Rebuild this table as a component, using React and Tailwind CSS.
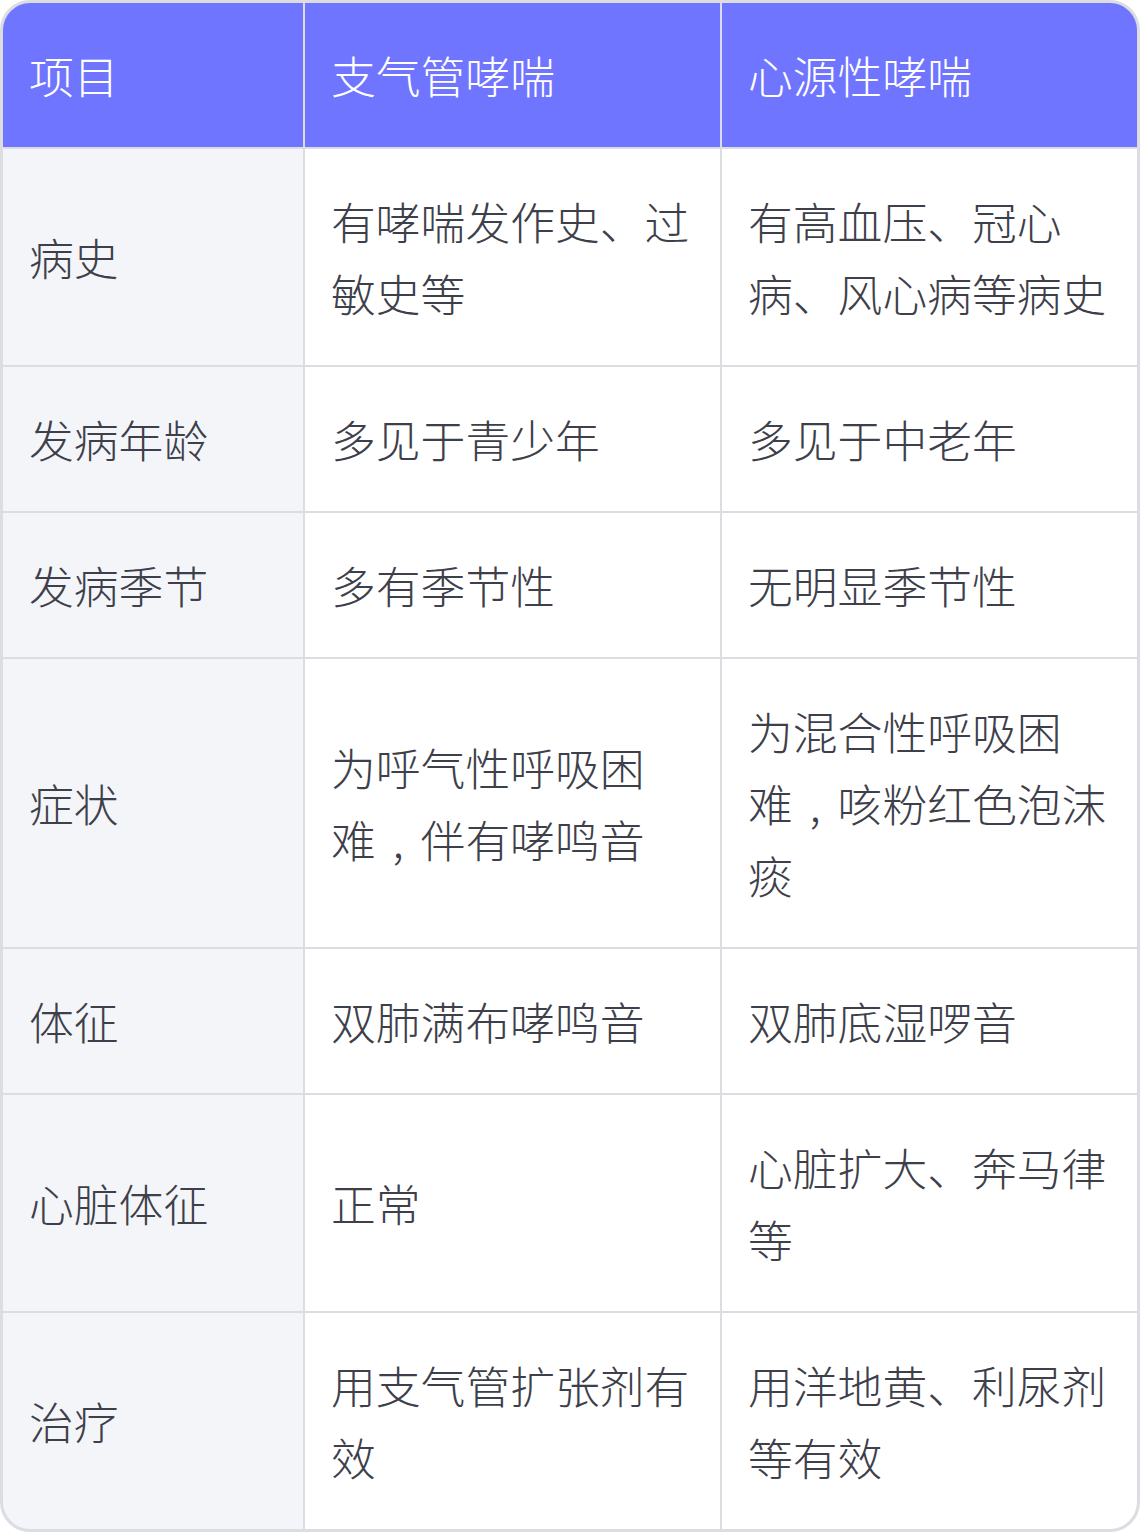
import React from "react";

const C = () => <span className="inline-block w-[1em] text-center">,</span>;

const rows = [
  ["病史", "有哮喘发作史、过敏史等", "有高血压、冠心病、风心病等病史"],
  ["发病年龄", "多见于青少年", "多见于中老年"],
  ["发病季节", "多有季节性", "无明显季节性"],
  ["症状", <>为呼气性呼吸困<span className="whitespace-nowrap">难<C /></span>伴有哮鸣音</>, <>为混合性呼吸困<span className="whitespace-nowrap">难<C /></span>咳粉红色泡沫痰</>],
  ["体征", "双肺满布哮鸣音", "双肺底湿啰音"],
  ["心脏体征", "正常", "心脏扩大、奔马律等"],
  ["治疗", "用支气管扩张剂有效", "用洋地黄、利尿剂等有效"],
];

const font = { fontFamily: '"Noto Sans CJK SC", "Noto Sans", sans-serif' };

export default function App() {
  return (
    <div className="w-[1140px] h-[1532px] bg-white" style={font}>
      <div className="grid grid-cols-[300px_415px_415px] gap-[2px] bg-[#dcdde2] border-[3px] border-[#dcdde2] rounded-[30px] overflow-hidden text-[44.8px] leading-[72px] font-light">
        {["项目", "支气管哮喘", "心源性哮喘"].map((h) => (
          <div key={h} className="bg-[#7075ff] text-white pl-[26px] pr-[28px] py-[36px] flex items-center">
            {h}
          </div>
        ))}
        {rows.map((r) => (
          <React.Fragment key={r[0]}>
            <div className="bg-[#f4f5f9] text-[#3d404a] pl-[26px] pr-[28px] py-[36px] flex items-center">{r[0]}</div>
            <div className="bg-white text-[#3d404a] pl-[26px] pr-[28px] py-[36px] flex items-center"><div>{r[1]}</div></div>
            <div className="bg-white text-[#3d404a] pl-[26px] pr-[28px] py-[36px] flex items-center"><div>{r[2]}</div></div>
          </React.Fragment>
        ))}
      </div>
    </div>
  );
}
